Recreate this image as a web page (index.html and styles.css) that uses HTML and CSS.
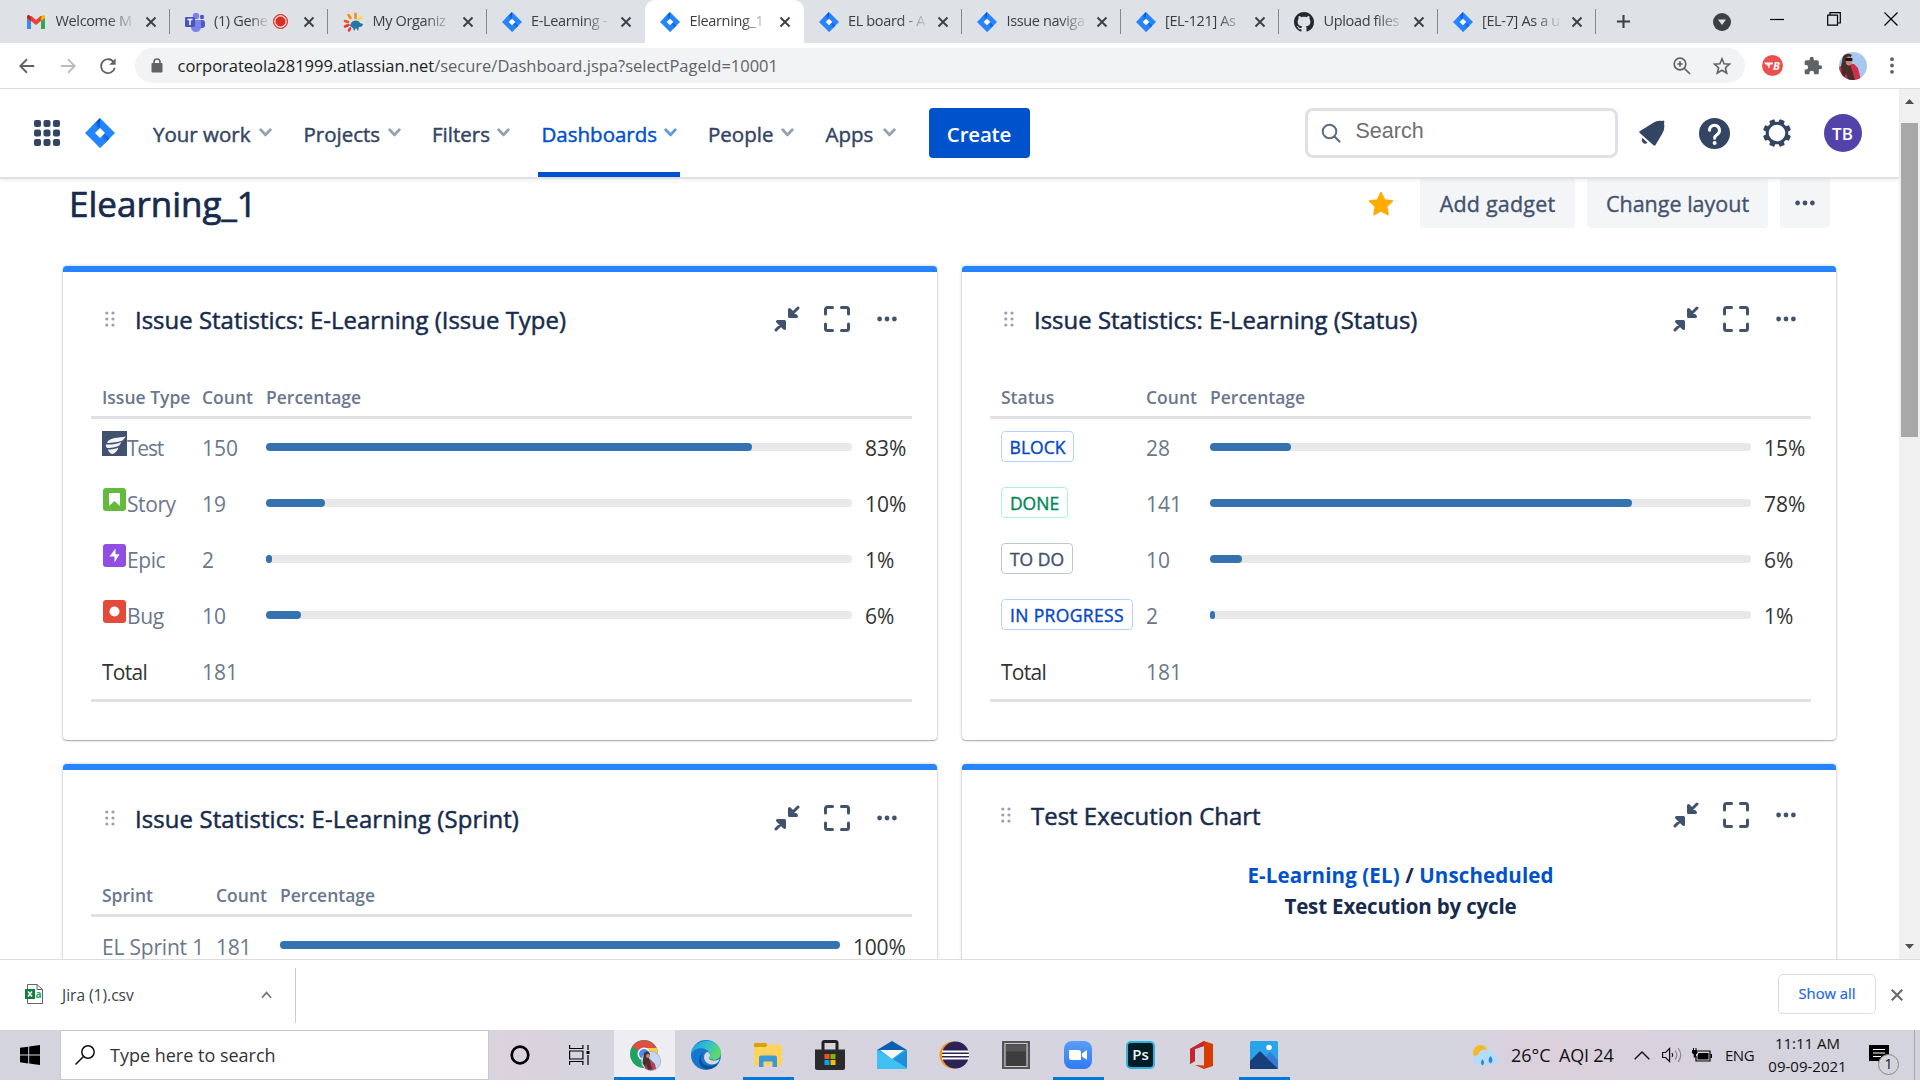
FILE: index.html
```html
<!DOCTYPE html>
<html lang="en">
<head>
<meta charset="utf-8">
<title>Elearning_1</title>
<link rel="stylesheet" href="styles.css">
</head>
<body>
<svg class="defs" aria-hidden="true">
  <defs>
    <linearGradient id="jg" x1="0.9" y1="0.2" x2="0.5" y2="0.6"><stop offset="0" stop-color="#0052cc"/><stop offset="1" stop-color="#2684ff"/></linearGradient>
    <linearGradient id="edge1" x1="0" y1="0" x2="1" y2="0.4"><stop offset="0" stop-color="#1b9de2"/><stop offset="0.6" stop-color="#35c1c9"/><stop offset="1" stop-color="#5fd868"/></linearGradient>
    <linearGradient id="zoomg" x1="0" y1="0" x2="0" y2="1"><stop offset="0" stop-color="#5a9cf8"/><stop offset="1" stop-color="#2f7bf5"/></linearGradient>
  </defs>
  <symbol id="jira" viewBox="0 0 24 24"><path d="M12 0 24 12 12 24 0 12z" fill="#2684ff"/><path d="M12 0v9l-3 3-4.5-4.5z" fill="url(#jg)"/><path d="M12 24v-9l3-3 4.500 4.500z" fill="url(#jg)"/><path d="M12 8l4 4-4 4-4-4z" fill="#fff"/></symbol>
  <symbol id="x" viewBox="0 0 12 12"><path d="M1.500 1.500l9 9M10.500 1.500l-9 9" fill="none" stroke="currentColor" stroke-width="1.900"/></symbol>
  <symbol id="chev" viewBox="0 0 12 8"><path d="M1.600 1.500 6 6.200l4.400-4.700" fill="none" stroke="currentColor" stroke-width="2.600" stroke-linecap="round" stroke-linejoin="round"/></symbol>
  <symbol id="grip" viewBox="0 0 10 16"><g fill="#97a0af"><circle cx="1.800" cy="2" r="1.600"/><circle cx="8" cy="2" r="1.600"/><circle cx="1.800" cy="8" r="1.600"/><circle cx="8" cy="8" r="1.600"/><circle cx="1.800" cy="14" r="1.600"/><circle cx="8" cy="14" r="1.600"/></g></symbol>
  <symbol id="shrink" viewBox="0 0 26 26"><g fill="#42526e" stroke="#42526e" stroke-width="3" stroke-linecap="round" stroke-linejoin="round"><path d="M24 2l-8 8M15.500 3.500v7h7z"/><path d="M2 24l8-8M3.500 15.500h7v7z"/></g></symbol>
  <symbol id="full" viewBox="0 0 26 26"><path d="M1.500 8V3.500a2 2 0 0 1 2-2H8.500M17.500 1.500h5a2 2 0 0 1 2 2V8M24.500 18v4.500a2 2 0 0 1-2 2h-5M8.500 24.500h-5a2 2 0 0 1-2-2V18" fill="none" stroke="#42526e" stroke-width="3" stroke-linecap="round"/></symbol>
  <symbol id="dots" viewBox="0 0 20 6"><g fill="#42526e"><circle cx="2.600" cy="3" r="2.400"/><circle cx="10" cy="3" r="2.400"/><circle cx="17.400" cy="3" r="2.400"/></g></symbol>
</svg>

<div class="tabs">
  <div class="tab"><svg class="fav" viewBox="0 0 20 20"><path d="M1 4v13h4V9l5 4 5-4v8h4V4z" fill="#ea4335"/><path d="M5 3.500h10L10 8z" fill="#dee1e6"/><path d="M1 6v11h4V9z" fill="#4285f4"/><path d="M15 9v8h4V6z" fill="#34a853"/><path d="M15 5.500V9l4-3V4.500c0-1.500-1.500-2-2.500-1.200z" fill="#fbbc04"/><path d="M5 5.500V9L1 6V4.500C1 3 2.500 2.500 3.500 3.300z" fill="#c5221f"/></svg><span class="tt">Welcome M</span><svg class="cl"><use href="#x"/></svg></div>
  <div class="tab"><svg class="fav" viewBox="0 0 20 20"><circle cx="11" cy="4" r="3.200" fill="#7b83eb"/><circle cx="17" cy="5" r="2.200" fill="#5059c9"/><rect x="13" y="8" width="7" height="8" rx="3" fill="#5059c9"/><path d="M6 8h10v6a5 5 0 0 1-10 2z" fill="#7b83eb"/><rect y="5" width="10" height="10" rx="1" fill="#4b53bc"/><path d="M2.500 7.500h5M5 7.500v5.500" stroke="#fff" stroke-width="1.500"/></svg><span class="tt rec">(1) Gene</span><i class="dot"></i><svg class="cl"><use href="#x"/></svg></div>
  <div class="tab"><svg class="fav" viewBox="0 0 20 20"><g fill="none" stroke-width="2.600" stroke-linecap="round"><path d="M12.500 6V2" stroke="#fb8c00"/><path d="M7.500 6 5.500 3" stroke="#fb8c00"/><path d="M16 7l2-1.500" stroke="#fdd835"/><path d="M5 10 2 9" stroke="#f4511e"/><path d="M5.500 13 2 14.500" stroke="#e53935"/><path d="M7 16.500 6 18.500" stroke="#e53935"/></g><path d="M7 14c1-6 8-7 10-3l3 1-1 2.500-3 .5-1 4-2-3-2 3-1-3z" fill="#2874a6"/></svg><span class="tt">My Organiz</span><svg class="cl"><use href="#x"/></svg></div>
  <div class="tab nosep"><svg class="fav"><use href="#jira"/></svg><span class="tt">E-Learning -</span><svg class="cl"><use href="#x"/></svg></div>
  <div class="tab active"><svg class="fav"><use href="#jira"/></svg><span class="tt">Elearning_1</span><svg class="cl"><use href="#x"/></svg></div>
  <div class="tab"><svg class="fav"><use href="#jira"/></svg><span class="tt">EL board - A</span><svg class="cl"><use href="#x"/></svg></div>
  <div class="tab"><svg class="fav"><use href="#jira"/></svg><span class="tt">Issue naviga</span><svg class="cl"><use href="#x"/></svg></div>
  <div class="tab"><svg class="fav"><use href="#jira"/></svg><span class="tt">[EL-121] As</span><svg class="cl"><use href="#x"/></svg></div>
  <div class="tab"><svg class="fav" viewBox="0 0 16 16"><path fill="#24292e" d="M8 0C3.580 0 0 3.580 0 8c0 3.540 2.290 6.530 5.470 7.590.4.070.55-.17.55-.38 0-.19-.01-.82-.01-1.490-2.010.37-2.530-.49-2.690-.94-.09-.23-.48-.94-.82-1.130-.28-.15-.68-.52-.01-.53.63-.01 1.080.58 1.230.82.72 1.210 1.870.87 2.330.66.07-.52.28-.87.51-1.070-1.780-.2-3.640-.89-3.640-3.950 0-.87.31-1.590.82-2.150-.08-.2-.36-1.020.08-2.120 0 0 .67-.21 2.200.82.64-.18 1.320-.27 2-.27s1.360.09 2 .27c1.530-1.040 2.200-.82 2.200-.82.44 1.100.16 1.920.08 2.120.51.56.82 1.270.82 2.150 0 3.070-1.870 3.750-3.650 3.950.29.25.54.73.54 1.480 0 1.070-.01 1.930-.01 2.200 0 .21.15.46.55.38A8.010 8.010 0 0 0 16 8c0-4.420-3.580-8-8-8z"/></svg><span class="tt">Upload files</span><svg class="cl"><use href="#x"/></svg></div>
  <div class="tab last"><svg class="fav"><use href="#jira"/></svg><span class="tt">[EL-7] As a u</span><svg class="cl"><use href="#x"/></svg></div>
  <svg class="plus" viewBox="0 0 16 16"><path d="M8 1v14M1 8h14" stroke="#3c4043" stroke-width="2.200"/></svg>
  <div class="win">
    <svg width="18" height="18" viewBox="0 0 18 18"><circle cx="9" cy="9" r="9" fill="#3c4043"/><path d="M5 6.500h8L9 12z" fill="#dee1e6"/></svg>
    <svg width="14" height="14" viewBox="0 0 14 14"><path d="M0 7.500h14" stroke="#000" stroke-width="1.200"/></svg>
    <svg width="14" height="14" viewBox="0 0 14 14"><path d="M.7 3.200h9.800v10H.7zM3 3V.7h10.300v10.300H11" fill="none" stroke="#000" stroke-width="1.200"/></svg>
    <svg width="14" height="14" viewBox="0 0 14 14"><path d="M.5.500l13 13M13.500.500l-13 13" stroke="#000" stroke-width="1.200"/></svg>
  </div>
</div>

<div class="toolbar">
  <svg class="ti" viewBox="0 0 20 20"><path d="M18 10H3M10 2.500 2.500 10l7.500 7.500" fill="none" stroke="#5f6368" stroke-width="2"/></svg>
  <svg class="ti" viewBox="0 0 20 20"><path d="M2 10h15M10 2.500 17.500 10 10 17.500" fill="none" stroke="#babcbe" stroke-width="2"/></svg>
  <svg class="ti" viewBox="0 0 20 20"><path d="M16.500 6A7.700 7.700 0 1 0 17.500 12" fill="none" stroke="#5f6368" stroke-width="2"/><path d="M18.500 1.500v7h-7z" fill="#5f6368"/></svg>
  <div class="omni">
    <svg width="12" height="15" viewBox="0 0 12 15"><rect x=".5" y="5" width="11" height="9.500" rx="1" fill="#5f6368"/><path d="M3 6V4a3 3 0 0 1 6 0v2" fill="none" stroke="#5f6368" stroke-width="1.600"/></svg>
    <span class="url"><b>corporateola281999.atlassian.net</b>/secure/Dashboard.jspa?selectPageId=10001</span>
    <svg class="zoomi" width="18" height="18" viewBox="0 0 18 18"><circle cx="7" cy="7" r="5.800" fill="none" stroke="#5f6368" stroke-width="1.700"/><path d="M11.500 11.500l5.500 5.500M7 4.300v5.400M4.300 7h5.400" stroke="#5f6368" stroke-width="1.700"/></svg>
    <svg width="18" height="18" viewBox="0 0 18 18"><path d="M9 1.800l2.100 5 5.400.4-4.100 3.500 1.300 5.300L9 13.200 4.300 16l1.300-5.300L1.500 7.200l5.400-.4z" fill="none" stroke="#5f6368" stroke-width="1.600"/></svg>
  </div>
  <svg class="ext" width="21" height="21" viewBox="0 0 21 21"><circle cx="10.500" cy="10.500" r="10.500" fill="#eb5050"/><path d="M2 7.500h9l-.5 2H8l-.7 3.500H6l.4-2.200H4.500l1-1.300h-2z" fill="#fff"/><text x="11" y="14.500" class="bico">B</text></svg>
  <svg class="puz" width="20" height="20" viewBox="0 0 24 24"><path fill="#5f6368" d="M20.500 11H19V7a2 2 0 0 0-2-2h-4V3.500a2.500 2.500 0 0 0-5 0V5H4a2 2 0 0 0-2 2v3.800h1.500a2.700 2.700 0 0 1 0 5.400H2V20a2 2 0 0 0 2 2h3.800v-1.500a2.700 2.700 0 0 1 5.400 0V22H17a2 2 0 0 0 2-2v-4h1.500a2.500 2.500 0 0 0 0-5z"/></svg>
  <svg class="ava" width="28" height="28" viewBox="0 0 28 28"><clipPath id="ac"><circle cx="14" cy="14" r="14"/></clipPath><g clip-path="url(#ac)"><rect width="28" height="28" fill="#a9c8f0"/><path d="M0 15l6-3 9 0 4 4 3 12H0z" fill="#cf2f4c"/><path d="M4 4q4-4 9-1l-3 5 2 7 4 13H9l-2-7-2 7H3L2 14z" fill="#4a2c2a"/><ellipse cx="10" cy="9" rx="3.200" ry="4.500" fill="#c48a76"/><rect x="6.500" y="6" width="7" height="3" rx="1" fill="#151522"/></g></svg>
  <svg width="4" height="17" viewBox="0 0 4 17"><g fill="#5f6368"><circle cx="2" cy="2.200" r="1.900"/><circle cx="2" cy="8.500" r="1.900"/><circle cx="2" cy="14.800" r="1.900"/></g></svg>
</div>

<div class="view">
  <div class="page">
    <header class="nav">
      <svg class="apps" viewBox="0 0 26 26"><g fill="#344563"><rect width="7" height="7" rx="2"/><rect x="9.500" width="7" height="7" rx="2"/><rect x="19" width="7" height="7" rx="2"/><rect y="9.500" width="7" height="7" rx="2"/><rect x="9.500" y="9.500" width="7" height="7" rx="2"/><rect x="19" y="9.500" width="7" height="7" rx="2"/><rect y="19" width="7" height="7" rx="2"/><rect x="9.500" y="19" width="7" height="7" rx="2"/><rect x="19" y="19" width="7" height="7" rx="2"/></g></svg>
      <svg class="logo"><use href="#jira"/></svg>
      <nav class="menu">
        <a class="m1">Your work<svg><use href="#chev"/></svg></a>
        <a class="m2">Projects<svg><use href="#chev"/></svg></a>
        <a class="m3">Filters<svg><use href="#chev"/></svg></a>
        <a class="m4 on">Dashboards<svg><use href="#chev"/></svg></a>
        <a class="m5">People<svg><use href="#chev"/></svg></a>
        <a class="m6">Apps<svg><use href="#chev"/></svg></a>
      </nav>
      <button class="create">Create</button>
      <div class="search"><svg width="20" height="20" viewBox="0 0 20 20"><circle cx="8.500" cy="8.500" r="6.800" fill="none" stroke="#5e6c84" stroke-width="2"/><path d="M13.500 13.500l5 5" stroke="#5e6c84" stroke-width="2.200" stroke-linecap="round"/></svg><span>Search</span></div>
      <svg class="bell" viewBox="0 0 26 26"><path d="M14 3c3.500-2.300 6.500-2.700 9-2l1.500-.5 1 1L25 3c.8 4 .3 7-1.700 10.500L16.500 25c-.6 1-1.400 1-2 .3L.8 13c-.8-.8-.6-1.500.2-2z" fill="#344563"/><path d="M3.500 18l5 4.800c-1.600 1.500-3.500 1.200-4.600 0-1.200-1.300-1.500-3.300-.4-4.800z" fill="#344563"/></svg>
      <svg class="help" viewBox="0 0 31 31"><circle cx="15.500" cy="15.500" r="15.500" fill="#344563"/><path d="M10.500 12.300a5 5 0 1 1 7.800 4.100c-1.700 1.100-2.700 1.700-2.700 3.900" fill="none" stroke="#fff" stroke-width="3" stroke-linecap="round"/><circle cx="15.600" cy="25" r="2" fill="#fff"/></svg>
      <svg class="gear" viewBox="0 0 28 28"><circle cx="14" cy="14" r="9.800" fill="none" stroke="#344563" stroke-width="3"/><g fill="#344563" transform="rotate(22.500 14 14)"><path id="th" d="M11.200 4.500V1q0-1 1-1h3.600q1 0 1 1v3.500z"/><use href="#th" transform="rotate(45 14 14)"/><use href="#th" transform="rotate(90 14 14)"/><use href="#th" transform="rotate(135 14 14)"/><use href="#th" transform="rotate(180 14 14)"/><use href="#th" transform="rotate(225 14 14)"/><use href="#th" transform="rotate(270 14 14)"/><use href="#th" transform="rotate(315 14 14)"/></g></svg>
      <div class="tb">TB</div>
    </header>

    <div class="head">
      <h1>Elearning_1</h1>
      <svg class="fstar" viewBox="0 0 26 26"><path d="M13 1.500l3.500 7.400 8 1-5.900 5.600 1.500 8.200L13 19.800l-7.100 3.900 1.500-8.200L1.500 9.900l8-1z" fill="#ffab00" stroke="#ffab00" stroke-width="1.500" stroke-linejoin="round"/></svg>
      <button class="btn b1">Add gadget</button>
      <button class="btn b2">Change layout</button>
      <button class="btn b3"><svg class="dt"><use href="#dots"/></svg></button>
    </div>

    <main class="grid">
      <section class="card t1">
        <div class="ch"><svg class="grip"><use href="#grip"/></svg><h2>Issue Statistics: E-Learning (Issue Type)</h2><svg class="ic"><use href="#shrink"/></svg><svg class="ic"><use href="#full"/></svg><svg class="dt"><use href="#dots"/></svg></div>
        <div class="table">
          <div class="row th"><span>Issue Type</span><span>Count</span><span>Percentage</span></div>
          <div class="row"><span class="lab"><svg class="ti25" viewBox="0 0 25 25"><rect width="25" height="25" fill="#42526e"/><path d="M24 5.500C17 7 7 6 5 12c5 0 12-1 15.500-2.500z" fill="#f4f5f7"/><path d="M19.500 11C14 13.500 9 13.800 3.800 13.500c0 2 .5 3 1.500 3.500 4 .3 9-.8 12-2.500z" fill="#f4f5f7"/><path d="M16.500 16.500c-3 1.500-6.500 2-10.500 2 .8 2.500 2 4 4.200 4.500 3.300-.8 5-3 6.300-6.500z" fill="#f4f5f7"/></svg><span class="kern">Test</span></span><span>150</span><div class="bar"><i style="width:83%"></i></div><span class="pct">83%</span></div>
          <div class="row"><span class="lab"><svg class="ti23" viewBox="0 0 23 23"><rect width="23" height="23" rx="3" fill="#63ba3c"/><path d="M7 5h9a1 1 0 0 1 1 1v12l-5.500-5L6 18V6a1 1 0 0 1 1-1z" fill="#fff"/></svg><span>Story</span></span><span>19</span><div class="bar"><i style="width:10%"></i></div><span class="pct">10%</span></div>
          <div class="row"><span class="lab"><svg class="ti23" viewBox="0 0 23 23"><rect width="23" height="23" rx="3" fill="#904ee2"/><path d="M12.500 4.500v5.800h4L11.500 18.500v-6h-5z" fill="#fff"/></svg><span>Epic</span></span><span>2</span><div class="bar"><i style="width:1%"></i></div><span class="pct">1%</span></div>
          <div class="row"><span class="lab"><svg class="ti23" viewBox="0 0 23 23"><rect width="23" height="23" rx="3" fill="#e5493a"/><circle cx="11.500" cy="11.500" r="5" fill="#fff"/></svg><span>Bug</span></span><span>10</span><div class="bar"><i style="width:6%"></i></div><span class="pct">6%</span></div>
          <div class="row"><span class="tot">Total</span><span>181</span></div>
        </div>
      </section>

      <section class="card t2">
        <div class="ch"><svg class="grip"><use href="#grip"/></svg><h2>Issue Statistics: E-Learning (Status)</h2><svg class="ic"><use href="#shrink"/></svg><svg class="ic"><use href="#full"/></svg><svg class="dt"><use href="#dots"/></svg></div>
        <div class="table">
          <div class="row th"><span>Status</span><span>Count</span><span>Percentage</span></div>
          <div class="row"><em class="loz blue w1">BLOCK</em><span>28</span><div class="bar"><i style="width:15%"></i></div><span class="pct">15%</span></div>
          <div class="row"><em class="loz green w2">DONE</em><span>141</span><div class="bar"><i style="width:78%"></i></div><span class="pct">78%</span></div>
          <div class="row"><em class="loz gray w3">TO DO</em><span>10</span><div class="bar"><i style="width:6%"></i></div><span class="pct">6%</span></div>
          <div class="row"><em class="loz blue w4">IN PROGRESS</em><span>2</span><div class="bar"><i style="width:1%"></i></div><span class="pct">1%</span></div>
          <div class="row"><span class="tot">Total</span><span>181</span></div>
        </div>
      </section>

      <section class="card t3">
        <div class="ch"><svg class="grip"><use href="#grip"/></svg><h2>Issue Statistics: E-Learning (Sprint)</h2><svg class="ic"><use href="#shrink"/></svg><svg class="ic"><use href="#full"/></svg><svg class="dt"><use href="#dots"/></svg></div>
        <div class="table">
          <div class="row th"><span>Sprint</span><span>Count</span><span>Percentage</span></div>
          <div class="row"><span>EL Sprint 1</span><span>181</span><div class="bar"><i style="width:100%"></i></div><span class="pct">100%</span></div>
        </div>
      </section>

      <section class="card t4">
        <div class="ch"><svg class="grip"><use href="#grip"/></svg><h2>Test Execution Chart</h2><svg class="ic"><use href="#shrink"/></svg><svg class="ic"><use href="#full"/></svg><svg class="dt"><use href="#dots"/></svg></div>
        <div class="chart"><p class="crumb"><a>E-Learning (EL)</a> / <a>Unscheduled</a></p><p>Test Execution by cycle</p></div>
      </section>
    </main>
  </div>
  <div class="sb">
    <svg width="9" height="5" viewBox="0 0 9 5"><path d="M0 5 4.500 0 9 5z" fill="#505050"/></svg>
    <div class="thumb"></div>
    <svg width="9" height="5" viewBox="0 0 9 5"><path d="M0 0 4.500 5 9 0z" fill="#505050"/></svg>
  </div>
</div>

<div class="dl">
  <svg class="xls" viewBox="0 0 18 20"><path d="M2.500.5h9.500l5.500 5v14h-15z" fill="#fff" stroke="#666"/><path d="M12 .5v5h5.500" fill="none" stroke="#666"/><rect y="5" width="10" height="10" fill="#107c41"/><path d="M3 7.500l4 5M7 7.500l-4 5" stroke="#fff" stroke-width="1.500"/><text x="10.500" y="13.500" class="xa">a</text></svg>
  <span class="fn">Jira (1).csv</span>
  <svg class="up" viewBox="0 0 12 8"><path d="M1 7l5-5.500L11 7" fill="none" stroke="#777" stroke-width="2"/></svg>
  <span class="showall">Show all</span>
  <svg class="dx"><use href="#x"/></svg>
</div>

<div class="task">
  <div class="start"><svg width="20" height="20" viewBox="0 0 20 20"><path d="M0 2.800 8.200 1.700v7.800H0zM9.200 1.500 20 0v9.500H9.200zM0 10.500h8.200v7.900L0 17.200zM9.200 10.500H20V20L9.200 18.500z"/></svg></div>
  <div class="ts"><svg width="20" height="20" viewBox="0 0 20 20"><circle cx="13" cy="7" r="6.200" fill="none" stroke="#111" stroke-width="1.500"/><path d="M8.500 11.500.5 19.500" stroke="#111" stroke-width="1.600"/></svg><span>Type here to search</span></div>
  <div class="app"><svg width="20" height="20" viewBox="0 0 20 20"><circle cx="10" cy="10" r="8.300" fill="none" stroke="#000" stroke-width="2.700"/></svg></div>
  <div class="app c2"><svg width="21" height="20" viewBox="0 0 21 20"><path d="M.6 0v3.500h13.300V0M.6 20v-3.500h13.300V20M.6 6h13.300v8H.6zM19 0v5M19 10v10" fill="none" stroke="#000" stroke-width="1.200"/><rect x="17.500" y="6" width="3" height="3"/></svg></div>
  <div class="app cur"><svg width="32" height="32" viewBox="0 0 32 32"><circle cx="15" cy="15" r="14" fill="#1da462"/><path d="M15 15 2.900 8A14 14 0 0 1 27.500 9z" fill="#dd5144"/><path d="M15 9h12.600a14 14 0 0 1-11.600 20l-1-14z" fill="#ffcd46"/><circle cx="15" cy="15" r="6.500" fill="#fff"/><circle cx="15" cy="15" r="5" fill="#4c8bf5"/><circle cx="22" cy="22" r="10" fill="#9fb0c6"/><circle cx="22" cy="22" r="9.300" fill="#c3d8f2"/><path d="M15 22l6-2 5 5 1 5-5 1.500-6-2z" fill="#b5405c"/><path d="M15 14q4-4 6 1l-1 4 3 11-4 1-2-6-1 3-2.500-4z" fill="#4a3230"/><circle cx="19" cy="17" r="2" fill="#c48a76"/></svg></div>
  <div class="app"><svg width="30" height="30" viewBox="0 0 30 30"><circle cx="15" cy="15" r="15" fill="#1476cc"/><path d="M0 14C1-2 29-5 30 13c0 6-6 8-11 6-2-1 1-2 0-5C16 7 5 6 0 14z" fill="url(#edge1)"/><path d="M13 17c0-3 2-5 4-5 2.500 1.500 2.500 3.500 1.300 5.500C17 20 23 22 28.500 19l-1.300 3C22 27 13 24 13 17z" fill="#d7d9e2"/><path d="M10 18c0 7 8 11 17.800 5C22 32 8 31 8 20q1-6 5-8-3 3-3 6z" fill="#0f5199"/></svg></div>
  <div class="app run"><svg width="28" height="24" viewBox="0 0 28 24"><path d="M0 4l13-.5L15 1.500h11q2 0 2 2v19H0z" fill="#ffd35c"/><path d="M0 1.500Q0 0 1.500 0H12l1.500 2-1.500 2H0z" fill="#e0a000"/><path d="M5 24V14.500q0-2 2-2h14q2 0 2 2V24h-4.500v-5.500h-9V24z" fill="#3d97db"/></svg></div>
  <div class="app"><svg width="30" height="30" viewBox="0 0 30 30"><path d="M8 10V3q0-1.500 1.500-1.500h11Q22 1.500 22 3v7" fill="none" stroke="#222" stroke-width="3"/><path d="M0 9.500h30V28q0 2-2 2H2q-2 0-2-2z" fill="#2b2b2b"/><path d="M9.500 14H14.500v5h-5z" fill="#f25022"/><path d="M15.500 14h5v5h-5z" fill="#7fba00"/><path d="M9.500 20h5v5h-5z" fill="#00a4ef"/><path d="M15.500 20h5v5h-5z" fill="#ffb900"/></svg></div>
  <div class="app"><svg width="30" height="28" viewBox="0 0 30 28"><path d="M0 9 15 0l15 9-3 2H3z" fill="#0a5fae"/><path d="M0 9l3 0h24l3 0v19H0z" fill="#28a8ea"/><path d="M3 9h24L15 18z" fill="#f5f5f5"/><path d="M0 9l30 18v1H0z" fill="#3fc0f3"/><path d="M30 9v18L16.500 18z" fill="#1f8fd6"/></svg></div>
  <div class="app"><svg width="30" height="28" viewBox="0 0 30 28"><circle cx="14" cy="14" r="13.500" fill="#f7941e"/><circle cx="16.500" cy="14" r="13.500" fill="#2c2255"/><path d="M3 10.500h27M3 14h27M3 17.500h27" stroke="#fff" stroke-width="2"/></svg></div>
  <div class="app"><svg width="28" height="28" viewBox="0 0 28 28"><path d="M0 0h28v28H0z" fill="#555"/><path d="M3 2.500h22v23H3z" fill="#3d3d3d" stroke="#ccc" stroke-width="1.200"/><path d="M4 3.500h20v7H4z" fill="#555"/></svg></div>
  <div class="app run"><svg width="28" height="28" viewBox="0 0 28 28"><rect width="28" height="28" rx="8" fill="url(#zoomg)"/><path d="M5 9h9.500q2.500 0 2.500 2.500V19H7.500Q5 19 5 16.500zM18 12.500l5-3.500v10l-5-3.500z" fill="#fff"/></svg></div>
  <div class="app"><svg width="29" height="28" viewBox="0 0 29 28"><rect x="1" y="1" width="27" height="26" rx="4" fill="#001d26" stroke="#29b5e0" stroke-width="2"/><text x="14.500" y="19" class="ps">Ps</text></svg></div>
  <div class="app"><svg width="24" height="28" viewBox="0 0 24 28"><path d="M0 8 14 0l9 3v22l-9 3-9-4 9 .5V5L5 8v12l-5 3z" fill="#d83b01"/><path d="M0 8 14 0v5L5 8v12l-5 3z" fill="#c4262e"/></svg></div>
  <div class="app run"><svg width="28" height="28" viewBox="0 0 28 28"><rect width="28" height="28" rx="1.500" fill="#2aa3e8"/><path d="M12 20l8-9 8 8v9H12z" fill="#3a7bd5"/><path d="M0 20 10 10l18 18H0z" fill="#173f7a"/><circle cx="19" cy="6.500" r="2.800" fill="#fff"/></svg></div>
  <div class="tray">
    <svg class="wx" width="26" height="21" viewBox="0 0 26 21"><circle cx="7.500" cy="7.500" r="7.500" fill="#f8b82e"/><path d="M5 20a5 5 0 0 1 0-10 8 8 0 0 1 14.500-1.500A5.800 5.800 0 0 1 20 20z" fill="#b5dcf7"/><path d="M9.500 14q3 4 0 6.500-3-2.500 0-6.500zM17.500 11q4 4.500 0 7.500-4-3 0-7.500z" fill="#2986d8"/></svg>
    <span class="w">26°C</span><span class="aqi">AQI 24</span>
    <svg class="tc" width="16" height="9" viewBox="0 0 16 9"><path d="M.7 8.300 8 1l7.300 7.300" fill="none" stroke="#111" stroke-width="1.400"/></svg>
    <svg class="spk" width="20" height="16" viewBox="0 0 20 16"><path d="M.6 5.500h3l4-4v13l-4-4h-3z" fill="none" stroke="#111" stroke-width="1.200"/><path d="M10 6q1.500 2 0 4" fill="none" stroke="#111" stroke-width="1.200"/><path d="M13 3.500q3.500 4.500 0 9M16 1q5.500 7 0 14" fill="none" stroke="#888" stroke-width="1.200"/></svg>
    <svg class="bat" width="20" height="14" viewBox="0 0 20 14"><path d="M6 3h12v10H4V8" fill="none" stroke="#000" stroke-width="1.200"/><path d="M6.500 5h10v6.500h-11V8zM18.500 6h1.500v4h-1.500zM0 2h5.500v3L4 6.500v3H1.700v-3L0 5z"/><path d="M1.500 0v3M4 0v3" stroke="#000"/></svg>
    <span class="eng">ENG</span>
    <div class="clock"><span>11:11 AM</span><span>09-09-2021</span></div>
    <div class="note"><svg width="20" height="20" viewBox="0 0 20 20"><path d="M0 0h20v16h-7v4l-4-4H0z"/><path d="M4 4.500h12M4 8h12M4 11.500h8" stroke="#fff" stroke-width="1.200"/></svg><i>1</i></div>
  </div>
</div>
</body>
</html>
```
FILE: styles.css
```css
*{box-sizing:border-box}
body{margin:0;width:1920px;height:1080px;overflow:hidden;background:#fff;font-family:"Open Sans","Noto Sans",sans-serif;font-stretch:91%;display:flex;flex-direction:column}
svg{display:block;flex:none;overflow:visible}
.defs{position:absolute;width:0;height:0}
h1,h2,p{margin:0;font-weight:inherit}
button{border:0;padding:0;font:inherit}
i,em{font-style:normal}

/* tab strip */
.tabs{height:43px;background:#dee1e6;display:flex;align-items:stretch;padding-left:11px;flex:none}
.tab{width:158.500px;flex:none;display:flex;align-items:center;padding-left:15px;background:linear-gradient(#85888c,#85888c) 100% 9px/1px 25px no-repeat}
.tab.nosep{background:none}
.tab.active{background:#fff;border-radius:10px 10px 0 0}
.fav{width:20px;height:20px}
.tt{width:84px;margin:-2px -5px 0 9.500px;white-space:nowrap;font-size:14.500px;letter-spacing:-.35px;color:#3c4043;-webkit-mask-image:linear-gradient(90deg,#000 62%,transparent 96%);mask-image:linear-gradient(90deg,#000 62%,transparent 96%)}
.tt.rec{width:58px}
.dot{width:15px;height:15px;margin-left:6px;margin-right:5px;border-radius:50%;border:1px solid #d93025;background:#d93025;box-shadow:inset 0 0 0 1.500px #f4d6d6}
.cl{width:12px;height:12px;margin-left:10px;color:#3c4043}
.plus{width:15px;height:15px;margin:14px 0 0 20px}
.win{display:flex;align-items:center;gap:43px;margin-left:82px;height:37px}
.win svg:first-child{margin-top:6px;margin-right:-4px}

/* address row */
.toolbar{height:46px;flex:none;border-bottom:1px solid #d9dadc;display:flex;align-items:center;padding-left:18px}
.ti{width:18px;height:18px;margin-right:22.500px}
.omni{width:1610px;height:35px;margin-left:-5px;border-radius:18px;background:#f1f3f4;display:flex;align-items:center;padding:0 14px 0 16px}
.url{margin-left:15px;font-size:16.500px;letter-spacing:-.01px;color:#5f6368;white-space:nowrap}
.url b{font-weight:400;color:#202124}
.zoomi{margin-left:auto;margin-right:22px}
.ext{margin-left:17px}
.bico{font:italic 700 11px "Open Sans",sans-serif;fill:#fff}
.puz{margin-left:20px}
.ava{margin:0 23px 0 16px}

/* page viewport */
.view{height:871px;flex:none;display:flex;overflow:hidden;border-bottom:1px solid #dadce0}
.page{width:1899px}
.sb{width:21px;background:#f0f0f0;display:flex;flex-direction:column;align-items:center;padding:10px 0 10px}
.thumb{width:17px;height:314px;background:#a8a8a8;margin:19px 0 auto}

.nav{height:90px;border-bottom:2px solid #dfe1e6;box-shadow:0 2px 3px rgba(9,30,66,.06);display:flex;align-items:center;padding-left:34px;color:#344563;font-size:20.500px;position:relative}
.apps{width:26px;height:26px;margin-right:25px}
.logo{width:30px;height:32px;margin-right:38px}
.menu{display:flex;height:88px;gap:31.500px;-webkit-text-stroke:.45px}
.menu a{display:flex;align-items:center;justify-content:space-between;white-space:nowrap;padding-top:1px}
.menu svg{width:13px;height:9px;color:#97a0af;margin-top:-2px}
.m1{width:119px}.m2{width:97px}.m3{width:78px}.m4{width:135px}.m5{width:86px}.m6{width:70px}
.menu .on{color:#0052cc;box-sizing:content-box;height:87px;margin:0 -3.500px;padding:1px 3.500px 0;background:linear-gradient(#0052cc,#0052cc) 0 100%/100% 5px no-repeat}
.menu .on svg{color:#6698e0}
.create{width:101px;height:50px;margin-left:33px;padding-top:1px;border-radius:4px;background:#0052cc;color:#fff;font-weight:600;font-size:20.500px;letter-spacing:-.2px}
.search{width:313px;height:50px;margin-left:275px;border:3px solid #dfe1e6;border-radius:8px;display:flex;align-items:center;padding-left:13px;color:#6f6f6f;font:21.500px "Liberation Sans",sans-serif}
.search span{margin:-4px 0 0 15px}
.bell{width:26px;height:26px;margin-left:21px}
.help{width:31px;height:31px;margin-left:34px}
.gear{width:28px;height:28px;margin-left:33px}
.tb{width:38px;height:38px;margin-left:33px;border-radius:50%;background:#5243aa;color:#fff;font-size:17px;font-weight:600;display:flex;align-items:center;justify-content:center}

.head{display:flex;height:49px;align-items:center;padding-left:69px}
h1{width:1299px;font-size:35px;line-height:50px;-webkit-text-stroke:.7px;color:#172b4d;margin-top:1px;white-space:nowrap}
.fstar{width:26px;height:26px;margin-right:26px;margin-top:0}
.btn{height:50px;margin-top:-1px;border-radius:4px;background:#f4f5f7;color:#42526e;font-size:21.500px;margin-right:12px;white-space:nowrap;-webkit-text-stroke:.35px;display:flex;align-items:center;justify-content:center}
.b1{width:155px;letter-spacing:.2px}.b2{width:181px}.b3{width:50px;margin-right:0}
.dt{width:20px;height:6px}

.grid{display:grid;grid-template-columns:874px 874px;grid-template-rows:474px 474px;gap:24px 25px;padding:38px 0 0 63px}
.card{border-radius:4px;border-top:6px solid #2684ff;background:#fff;box-shadow:0 1px 1px rgba(9,30,66,.28),0 0 3px rgba(9,30,66,.31);padding:0 25px 0 28px}
.ch{height:94px;display:flex;align-items:center;padding:0 15px 0 14px}
.grip{width:10px;height:16px;margin-right:20px}
h2{flex:1;font-size:23.900px;-webkit-text-stroke:.5px;letter-spacing:.03px;color:#172b4d;white-space:nowrap;line-height:32px;padding-top:1px}
.ic{width:26px;height:26px;margin-right:24px}
.ic+.dt{margin-left:3px}
.table{border-bottom:3px solid #dfe1e6}
.row{display:grid;grid-template-columns:var(--a) 64px 1fr var(--p);height:56px;align-items:center;padding-left:11px;font-size:21px;color:#6b778c;white-space:nowrap}
.row>span,.lab>span{padding-top:2px}
.row>.lab{padding-top:0}
.t1{--a:100px;--p:60px}.t2{--a:145px;--p:60px}.t3{--a:114px;--p:72px}
.th{height:53px;padding-top:9px;font-size:17.500px;font-weight:600;border-bottom:3px solid #dfe1e6}
.bar{height:8px;border-radius:4px;background:#e8e8e8}
.bar i{display:block;height:8px;border-radius:4px;background:#3572b0}
.row>.pct{padding-left:13px;color:#333}
.tot{color:#333;letter-spacing:-.7px}
.kern{letter-spacing:-1.200px}
.lab{display:flex;align-items:center;letter-spacing:-.4px}
.ti25{width:25px;height:25px;margin-bottom:7px}
.ti23{width:23px;height:23px;margin:0 1px 7px}
.loz{display:flex;align-items:center;justify-content:center;height:31px;border:1px solid;border-radius:4px;font-size:17.500px;-webkit-text-stroke:.4px;margin-top:-1px;padding-top:1px}
.w1{width:73px}.w2{width:67px}.w3{width:72px}.w4{width:132px;letter-spacing:.35px}
.blue{color:#0747c6;border-color:#b3d4ff}
.green{color:#00875a;border-color:#abf5d1}
.gray{color:#42526e;border-color:#c1c7d0}
.t3 .ch{padding-top:1px}
.t3 h2{padding-top:2px;letter-spacing:.12px}
.t3 .row>span{padding-top:3px}
.t3 .row:last-child>span{letter-spacing:-.2px}
.t4 .ch{height:89px;padding-left:11px}
.t4 h2{line-height:30px;padding-top:2px}
.chart{text-align:center;font-size:20.500px;font-weight:700;letter-spacing:-.15px;line-height:31px;padding-top:1px;color:#172b4d;white-space:nowrap}
.crumb{letter-spacing:.12px}
.chart a{color:#0052cc}

/* downloads */
.dl{height:70px;flex:none;display:flex;align-items:center;padding-left:25px;font-size:15.500px;color:#3c4043}
.xls{width:18px;height:20px;margin-right:19px;margin-top:-2px}
.xa{font:700 10px "Open Sans",sans-serif;fill:#21a366}
.fn{width:199px}
.up{width:11px;height:8px}
.showall{width:98px;height:40px;margin-top:-2px;border:1px solid #dadce0;border-radius:5px;margin-left:auto;margin-right:14px;display:flex;align-items:center;justify-content:center;color:#1a66e8;font-size:14.800px;-webkit-text-stroke:.2px;padding-bottom:2px}
.dl::before{content:"";order:1;width:1px;height:55px;background:#ccc;margin-left:23px}
.showall,.dx{order:2}
.dx{width:14px;height:14px;margin-right:16px;color:#6b6b6b}

/* taskbar */
.task{height:50px;flex:none;display:flex;background:linear-gradient(90deg,#d3d4de 0,#d3d4de 480px,#ddd2de 500px,#d4d5df 600px,#d6d3df 820px,#d4d5df 1450px,#dcd0dd 1550px,#d6d2de 1700px,#d3d4de);color:#111}
.start{width:60px;display:flex;align-items:center;justify-content:center}
.ts{width:429px;background:#fff;border:1px solid #c8c8cc;display:flex;align-items:center;padding-left:14px;font-size:18px;color:#333}
.ts span{margin-left:15px}
.app{width:62px;height:50px;display:flex;align-items:center;justify-content:center;background:linear-gradient(#0078d7,#0078d7) center bottom/0 3px no-repeat;flex:none}
.c2{width:63px;padding-right:6px}
.cur{width:61px;background-color:#ededf2;background-size:100% 3px}
.run{background-size:51px 3px}
.ps{font:600 15px "Open Sans",sans-serif;text-anchor:middle;fill:#e8f6fb}
.tray{margin-left:auto;display:flex;align-items:center;width:447px;font-size:18px;white-space:nowrap}
.w{width:48px;margin-left:12px}
.aqi{width:75px;letter-spacing:-.2px}
.spk{margin-left:12px}.bat{margin-left:10px}
.eng{width:37px;margin-left:13px;font-size:15px;letter-spacing:-.5px}
.clock{width:91px;display:flex;flex-direction:column;text-align:center;font-size:15px;line-height:23px}
.note{position:relative;margin-left:16px;width:46px;height:50px;padding-top:15px;border-right:1px solid #a5a5b0}
.note i{position:absolute;left:9px;top:24px;width:21px;height:21px;border:1px solid #888;border-radius:50%;background:#d3d3dc;font-size:14px;line-height:18px;text-align:center}
```
